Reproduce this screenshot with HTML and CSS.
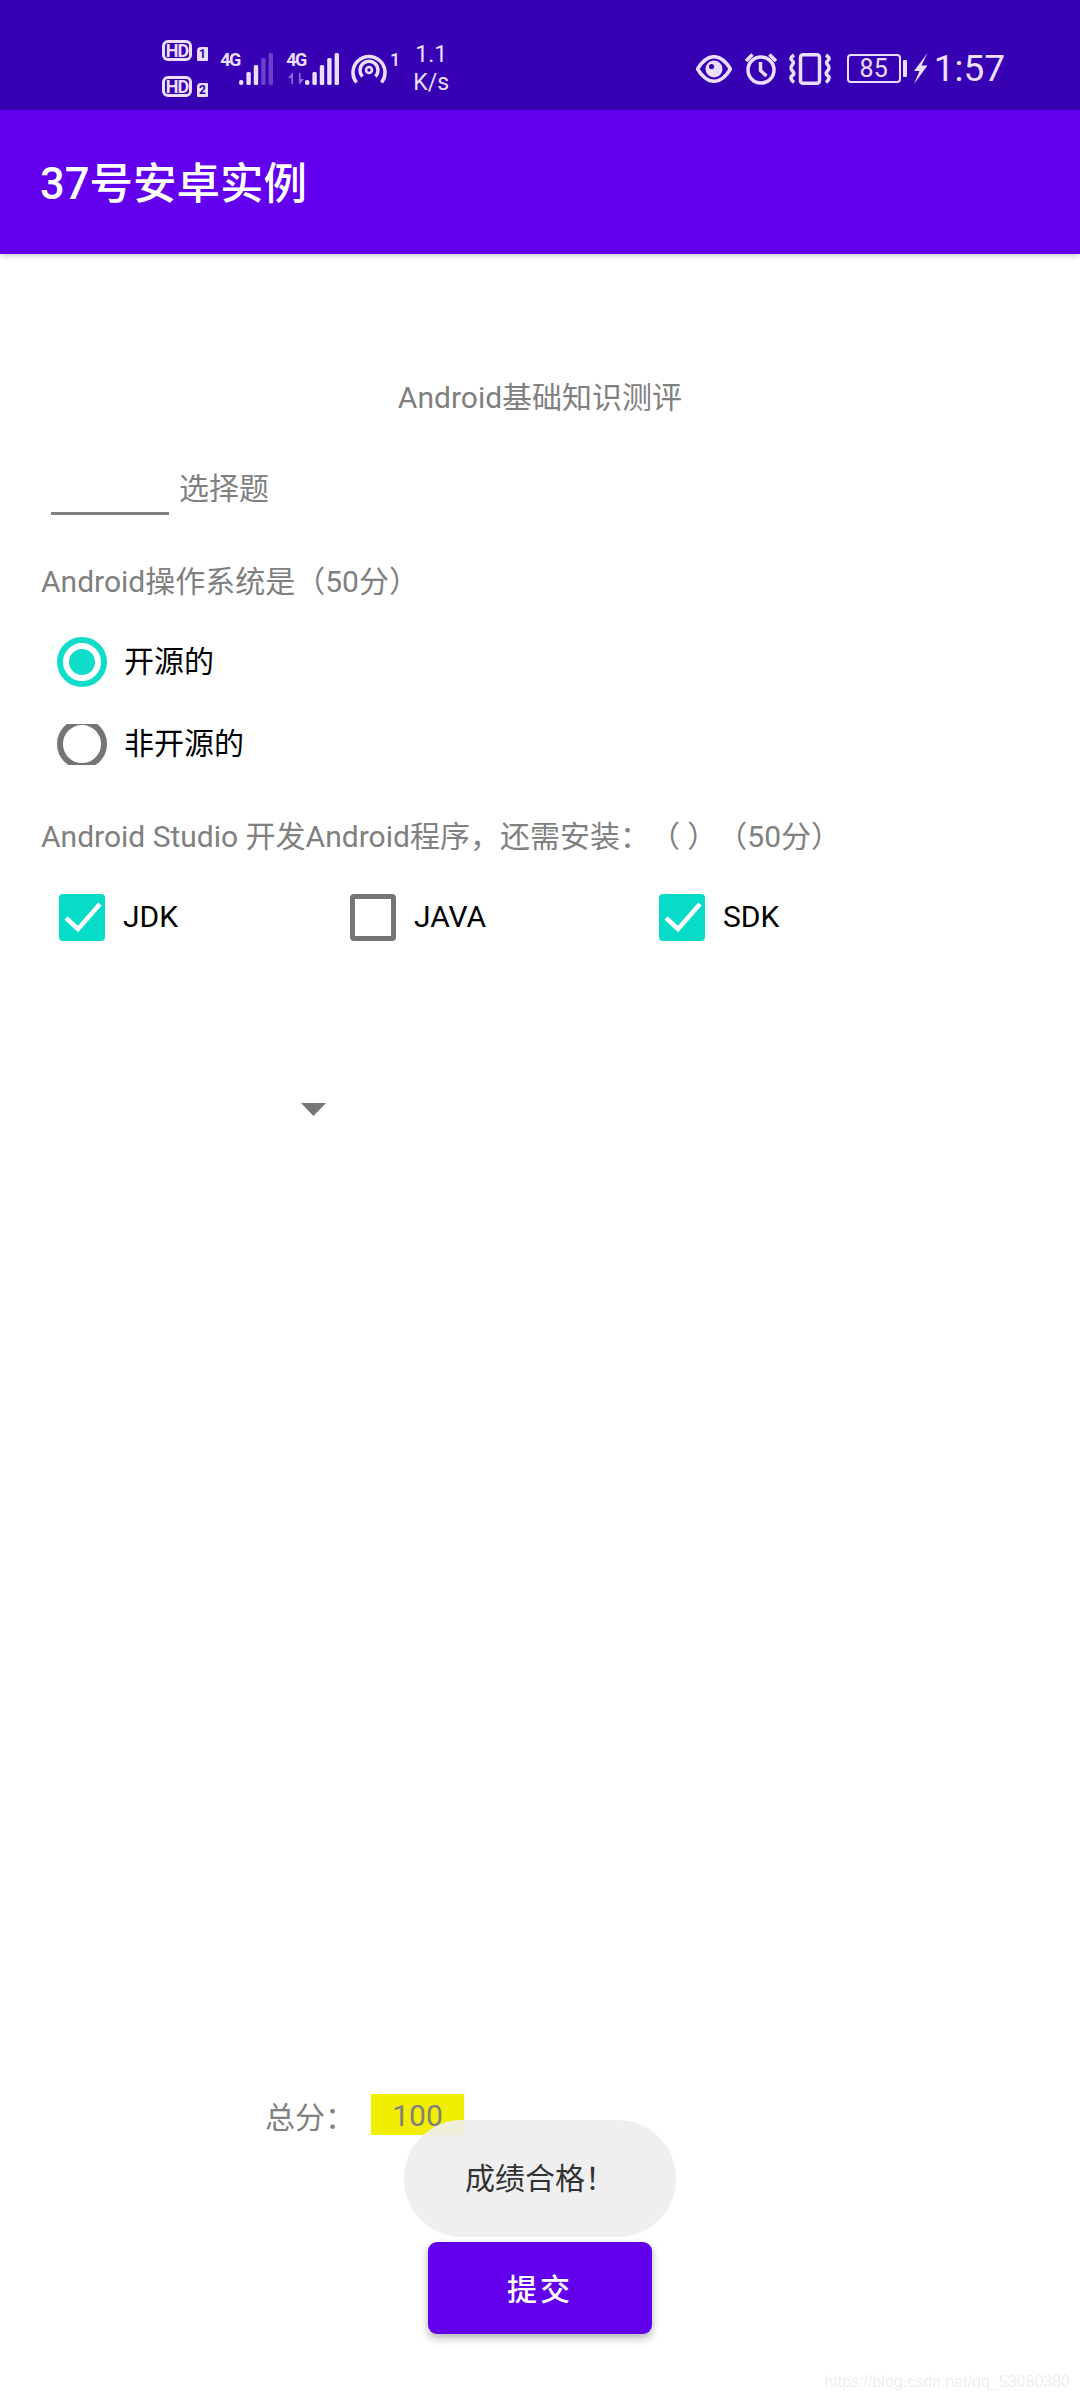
FILE: index.html
```html
<!DOCTYPE html>
<html lang="zh-CN">
<head>
    <meta charset="UTF-8">
    <meta name="viewport" content="width=device-width, initial-scale=1.0">
    <title>37号安卓实例</title>
    <link rel="stylesheet" href="styles.css">
</head>
<body>
    <div class="page">
        <div class="status-bar">
            <div class="status-left">
                <div class="hd-col">
                    <div class="hd-row"><span class="hd">HD</span><span class="sim">1</span></div>
                    <div class="hd-row"><span class="hd">HD</span><span class="sim">2</span></div>
                </div>
                <div class="net">
                    <div class="net-label"><span class="net-type">4G</span></div>
                    <svg class="bars" width="35" height="32" viewBox="0 0 35 32">
                        <rect x="0" y="27" width="4.4" height="5" rx="2"/>
                        <rect x="7.4" y="19" width="4.4" height="13" rx="1.5"/>
                        <rect x="14.8" y="12" width="4.4" height="20" rx="1.5"/>
                        <rect class="dim" x="22.2" y="5" width="4.4" height="27" rx="1.5"/>
                        <rect class="dim" x="29.6" y="0" width="4.4" height="32" rx="1.5"/>
                    </svg>
                </div>
                <div class="net net-second">
                    <div class="net-label">
                        <span class="net-type">4G</span>
                        <svg class="arrows" width="16" height="11" viewBox="0 0 16 11">
                            <path d="M0 5 L4 0 L5 0 V11 H3.4 V5 Z"/>
                            <path d="M11 0 H12.6 V6 H16 L12 11 L11 11 Z"/>
                        </svg>
                    </div>
                    <svg class="bars" width="35" height="32" viewBox="0 0 35 32">
                        <rect x="0" y="27" width="4.4" height="5" rx="2"/>
                        <rect x="7.4" y="19" width="4.4" height="13" rx="1.5"/>
                        <rect x="14.8" y="12" width="4.4" height="20" rx="1.5"/>
                        <rect x="22.2" y="5" width="4.4" height="27" rx="1.5"/>
                        <rect x="29.6" y="0" width="4.4" height="32" rx="1.5"/>
                    </svg>
                </div>
                <div class="hotspot">
                    <svg width="37" height="32" viewBox="0 0 37 32">
                        <path d="M5.5 29.5 A16 16 0 1 1 30.5 29.5"/>
                        <path d="M11.5 23.5 A9 9 0 1 1 24.5 23.5"/>
                        <circle cx="18" cy="17" r="3"/>
                    </svg>
                    <span class="hotspot-count">1</span>
                </div>
                <div class="speed">1.1<br>K/s</div>
            </div>
            <div class="status-right">
                <svg class="eye" width="36" height="28" viewBox="0 0 36 28">
                    <path class="line" d="M1.5 14 C7 5 12 1.7 18 1.7 S29 5 34.5 14 C29 23 24 26.3 18 26.3 S7 23 1.5 14 Z"/>
                    <circle class="solid" cx="18" cy="14" r="8.5"/>
                    <circle class="hole" cx="15.5" cy="11.5" r="2.6"/>
                </svg>
                <svg class="alarm" width="34" height="33" viewBox="0 0 34 33">
                    <circle class="line" cx="17" cy="18" r="13"/>
                    <path class="line" d="M16.5 10 V18.5 L22.5 24"/>
                    <path class="line" d="M2 9 L8.5 2.5 M32 9 L25.5 2.5"/>
                </svg>
                <svg class="vibrate" width="44" height="32" viewBox="0 0 44 32">
                    <rect class="line" x="12.5" y="1.8" width="19" height="28.4" rx="2.5"/>
                    <path class="line" d="M6 2 C2 5 2 6 5 8.5 C7 11 2 12.5 3 15.5 C3.500 18 7 19 5.500 21.500 C2 24 2 26 6 29.500"/>
                    <path class="line" d="M38 2 C42 5 42 6 39 8.5 C37 11 42 12.5 41 15.5 C40.500 18 37 19 38.500 21.500 C42 24 42 26 38 29.500"/>
                </svg>
                <div class="battery"><span class="battery-level">85</span></div>
                <span class="battery-cap"></span>
                <svg class="bolt" width="15" height="31" viewBox="0 0 15 31">
                    <path class="solid" d="M14.500 0 L1 18 H6.500 L1 31 L14.500 12.500 H8.500 Z"/>
                </svg>
                <span class="clock">1:57</span>
            </div>
        </div>

        <div class="app-bar">37号安卓实例</div>

        <div class="content">
            <div class="quiz-title">Android基础知识测评</div>

            <div class="section-row">
                <div class="blank-input"></div>
                <div class="section-label">选择题</div>
            </div>

            <div class="question question-one">Android操作系统是（50分）</div>

            <div class="radio-group">
                <div class="radio-row">
                    <div class="radio-clip"><span class="radio checked"></span></div>
                    <span class="option-text">开源的</span>
                </div>
                <div class="radio-row">
                    <div class="radio-clip clipped"><span class="radio"></span></div>
                    <span class="option-text">非开源的</span>
                </div>
            </div>

            <div class="question question-two">Android Studio 开发Android程序，还需安装：（ ）（50分）</div>

            <div class="check-row">
                <div class="check-item item-jdk">
                    <span class="checkbox checked">
                        <svg width="46" height="47" viewBox="0 0 46 47"><path d="M7 24 L19 35 L41 10"/></svg>
                    </span>
                    <span class="option-text">JDK</span>
                </div>
                <div class="check-item item-java">
                    <span class="checkbox"></span>
                    <span class="option-text">JAVA</span>
                </div>
                <div class="check-item item-sdk">
                    <span class="checkbox checked">
                        <svg width="46" height="47" viewBox="0 0 46 47"><path d="M7 24 L19 35 L41 10"/></svg>
                    </span>
                    <span class="option-text">SDK</span>
                </div>
            </div>

            <div class="spinner-arrow"></div>

            <div class="total-row">
                <span class="total-label">总分：</span>
                <span class="total-score">100</span>
            </div>

            <button class="submit-btn">提交</button>
        </div>

        <div class="toast">成绩合格！</div>
        <div class="watermark">https://blog.csdn.net/qq_53080380</div>
    </div>
</body>
</html>
```

FILE: styles.css
```css
* {
    box-sizing: border-box;
}
body {
    margin: 0;
    padding: 0;
    background-color: #fff;
    font-family: Roboto, "Noto Sans CJK SC", sans-serif;
    text-spacing-trim: space-all;
}
.page {
    width: 1080px;
    height: 2400px;
    position: relative;
    overflow: hidden;
    display: flex;
    flex-direction: column;
}

/* status bar */
.status-bar {
    height: 110px;
    padding: 27px 75px 0 162px;
    background-color: #3700b3;
    color: #eadfff;
    display: flex;
    align-items: center;
    justify-content: space-between;
}
.status-left,
.status-right {
    display: flex;
    align-items: center;
}
.hd-col {
    display: flex;
    flex-direction: column;
    gap: 15px;
    margin-right: 13px;
}
.hd-row {
    display: flex;
    align-items: flex-end;
    gap: 5px;
}
.hd {
    width: 30px;
    height: 21px;
    border: 3px solid #eadfff;
    border-radius: 6px;
    font-size: 18px;
    font-weight: 700;
    line-height: 15px;
    text-align: center;
    letter-spacing: -1px;
}
.sim {
    width: 11px;
    height: 14px;
    background-color: #eadfff;
    color: #3700b3;
    border-radius: 4px 1px 1px 1px;
    font-size: 12px;
    font-weight: 700;
    line-height: 14px;
    text-align: center;
}
.net {
    display: flex;
    align-items: flex-end;
    height: 32px;
    margin-right: 13px;
}
.net-second {
    margin-right: 11px;
}
.net-label {
    width: 18px;
    height: 32px;
    display: flex;
    flex-direction: column;
    align-items: center;
}
.net-type {
    font-size: 18px;
    font-weight: 700;
    line-height: 14px;
    letter-spacing: -1.5px;
}
.arrows {
    margin-top: 6px;
    fill: #8f6bd8;
    flex-shrink: 0;
}
.bars {
    fill: #eadfff;
}
.bars .dim {
    fill: #6a3fcb;
}
.hotspot {
    display: flex;
    align-items: flex-start;
    gap: 2px;
    margin-right: 13px;
}
.hotspot svg {
    fill: none;
    stroke: #eadfff;
    stroke-width: 3.5;
}
.hotspot svg circle {
    stroke-width: 2.5;
}
.hotspot-count {
    font-size: 18px;
    font-weight: 500;
    line-height: 14px;
}
.speed {
    width: 36px;
    font-size: 23px;
    line-height: 28px;
    text-align: center;
    white-space: nowrap;
}
.status-right .line {
    fill: none;
    stroke: #eadfff;
    stroke-width: 3.5;
}
.status-right .solid {
    fill: #eadfff;
}
.status-right .hole {
    fill: #3700b3;
}
.alarm {
    margin-left: 12px;
}
.vibrate {
    margin-left: 10px;
}
.battery {
    width: 54px;
    height: 29px;
    margin-left: 15px;
    border: 2px solid #eadfff;
    border-radius: 4px;
    text-align: center;
}
.battery-level {
    font-size: 25px;
    line-height: 25px;
    display: block;
}
.battery-cap {
    width: 4px;
    height: 17px;
    margin-left: 2px;
    background-color: #eadfff;
    border-radius: 1px;
}
.bolt {
    margin-left: 6px;
}
.clock {
    margin-left: 6px;
    font-size: 37px;
    line-height: 40px;
}

/* app bar */
.app-bar {
    height: 144px;
    padding: 6px 0 0 40px;
    background-color: #6200ee;
    color: #fff;
    font-size: 43.5px;
    font-weight: 500;
    line-height: 138px;
    box-shadow: 0 2px 5px rgba(0, 0, 0, 0.2);
    position: relative;
}

/* quiz */
.content {
    flex: 1;
    display: flex;
    flex-direction: column;
    padding-top: 124px;
    font-size: 30px;
    color: #808080;
}
.quiz-title {
    height: 40px;
    line-height: 40px;
    text-align: center;
}
.section-row {
    display: flex;
    height: 51px;
    margin-top: 46px;
    padding-left: 51px;
}
.blank-input {
    width: 118px;
    height: 51px;
    border-bottom: 3px solid #808080;
}
.section-label {
    margin-left: 10px;
    line-height: 50px;
}
.question {
    height: 40px;
    padding-left: 41px;
    line-height: 40px;
    white-space: nowrap;
}
.question-one {
    margin-top: 47px;
}
.question-two {
    margin-top: 32px;
}
.radio-group {
    margin-top: 19px;
}
.radio-row {
    display: flex;
    align-items: center;
    height: 82px;
    padding-left: 57px;
}
.radio-clip {
    width: 50px;
    height: 50px;
    display: flex;
    align-items: center;
    overflow: hidden;
}
.radio-clip.clipped {
    height: 41px;
}
.radio {
    width: 50px;
    height: 50px;
    flex-shrink: 0;
    border: 6px solid #757575;
    border-radius: 50%;
    display: flex;
    align-items: center;
    justify-content: center;
}
.radio.checked {
    border-color: #0fdcc9;
}
.radio.checked::after {
    content: "";
    width: 26px;
    height: 26px;
    background-color: #0fdcc9;
    border-radius: 50%;
}
.option-text {
    margin-left: 17px;
    color: #000;
    line-height: 40px;
}
.check-item .option-text {
    margin-left: 18px;
}
.check-row {
    display: flex;
    align-items: center;
    height: 80px;
    margin-top: 20px;
    padding-left: 59px;
}
.check-item {
    display: flex;
    align-items: center;
}
.item-jdk {
    width: 291px;
}
.item-java {
    width: 309px;
}
.checkbox {
    width: 46px;
    height: 47px;
    border: 5px solid #757575;
    border-radius: 4px;
}
.checkbox.checked {
    border: 0;
    background-color: #06dcc8;
}
.checkbox svg {
    display: block;
    fill: none;
    stroke: #fff;
    stroke-width: 4.5;
}
.spinner-arrow {
    width: 25px;
    height: 13px;
    margin: 146px 0 0 301px;
    background-color: #757575;
    clip-path: polygon(0 0, 100% 0, 50% 100%);
}
.total-row {
    display: flex;
    align-items: center;
    height: 41px;
    margin-top: auto;
    padding-left: 265px;
}
.total-label {
    width: 106px;
}
.total-score {
    width: 93px;
    height: 41px;
    padding-top: 1px;
    background-color: #f2ee00;
    line-height: 41px;
    text-align: center;
}
.submit-btn {
    width: 224px;
    height: 92px;
    margin: 107px 0 66px 428px;
    padding-bottom: 3px;
    border: none;
    border-radius: 9px;
    background-color: #6200ee;
    color: #fff;
    font-family: inherit;
    font-size: 30px;
    font-weight: 500;
    letter-spacing: 3px;
    box-shadow: 0 4px 8px rgba(0, 0, 0, 0.3);
}

/* overlays */
.toast {
    position: absolute;
    left: 404px;
    top: 2120px;
    width: 272px;
    height: 117px;
    border-radius: 58px;
    background-color: rgba(238, 238, 238, 0.92);
    color: #333;
    font-size: 30px;
    line-height: 117px;
    text-align: center;
}
.watermark {
    position: absolute;
    right: 10px;
    top: 2372px;
    color: #eeeeee;
    font-family: "Liberation Sans", sans-serif;
    font-size: 16px;
    line-height: 20px;
    filter: blur(0.4px);
}
```
